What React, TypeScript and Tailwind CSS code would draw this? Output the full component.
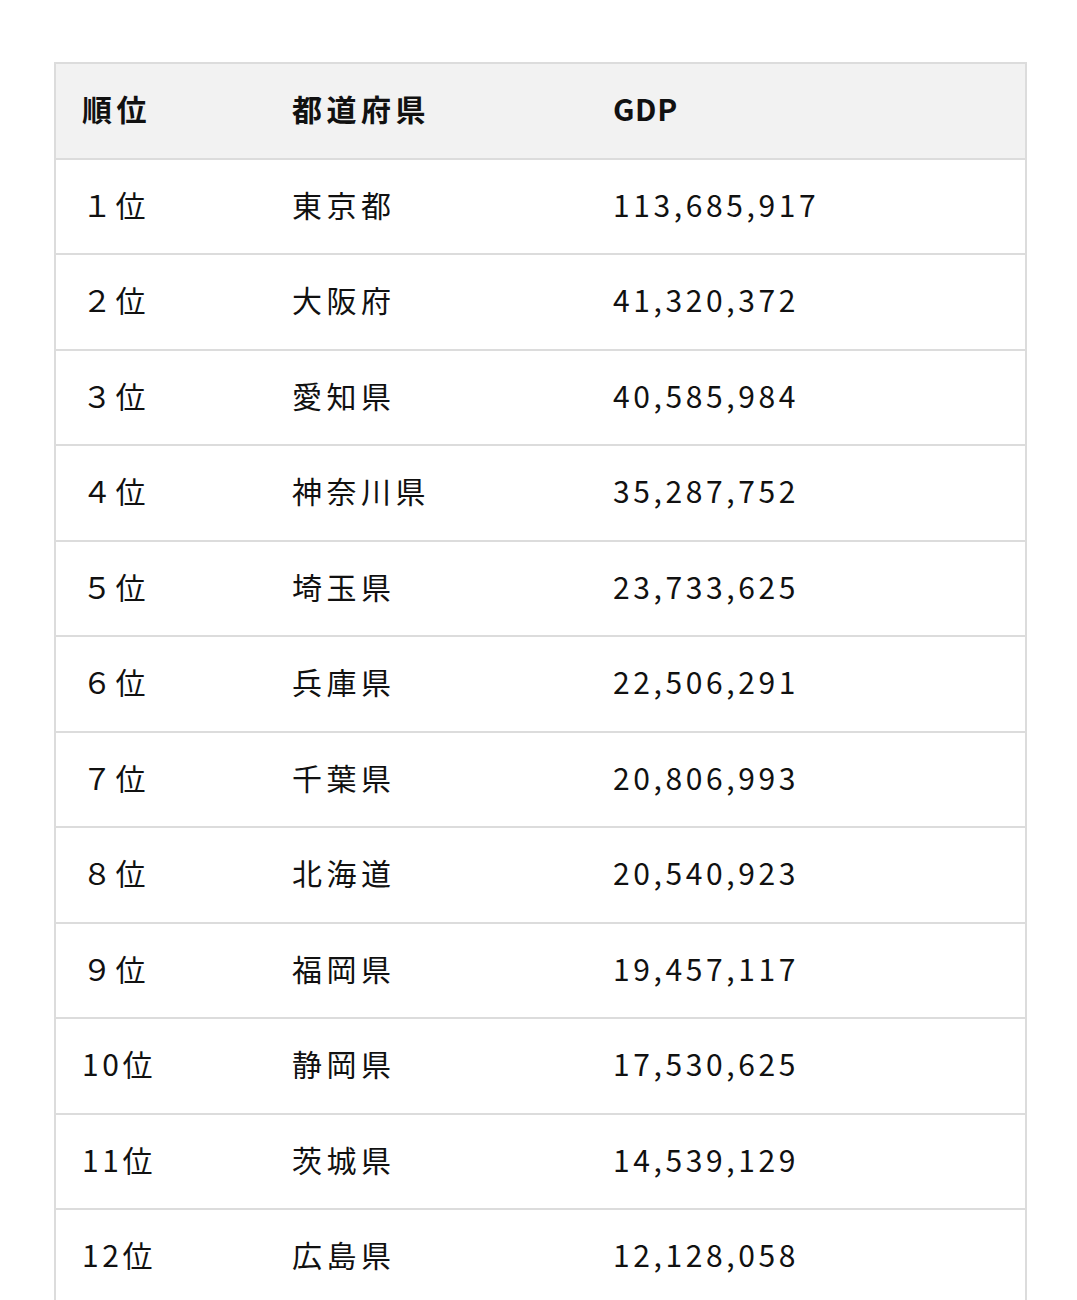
import React from 'react';

const rows = [
  ['１位', '東京都', '113,685,917'],
  ['２位', '大阪府', '41,320,372'],
  ['３位', '愛知県', '40,585,984'],
  ['４位', '神奈川県', '35,287,752'],
  ['５位', '埼玉県', '23,733,625'],
  ['６位', '兵庫県', '22,506,291'],
  ['７位', '千葉県', '20,806,993'],
  ['８位', '北海道', '20,540,923'],
  ['９位', '福岡県', '19,457,117'],
  ['10位', '静岡県', '17,530,625'],
  ['11位', '茨城県', '14,539,129'],
  ['12位', '広島県', '12,128,058'],
];

const App = () => {
  return (
    <div
      className="min-h-[1300px] bg-white pt-[62px] pl-[54px] text-[30px] leading-none tracking-[0.15em] text-[#111]"
      style={{ fontFamily: '"Noto Sans CJK JP", "Noto Sans", sans-serif' }}
    >
      <div className="w-[973px] border-2 border-[#dcdcdc]">
        <div className="flex h-[95.5px] items-center border-b-2 border-[#dcdcdc] bg-[#f2f2f2] pb-[5px] font-bold">
          <div className="w-[210px] pl-[26px]">順位</div>
          <div className="w-[321px] pl-[26px]">都道府県</div>
          <div className="flex-1 pl-[26px] tracking-[0.02em]">GDP</div>
        </div>
        {rows.map((r) => (
          <div key={r[0]} className="flex h-[95.5px] items-center border-b-2 border-[#dcdcdc] pb-[5px]">
            <div className="w-[210px] pl-[26px] tracking-[0.12em]">{r[0]}</div>
            <div className="w-[321px] pl-[26px]">{r[1]}</div>
            <div className="flex-1 pl-[26px] tracking-[0.12em]">{r[2]}</div>
          </div>
        ))}
      </div>
    </div>
  );
};

export default App;
